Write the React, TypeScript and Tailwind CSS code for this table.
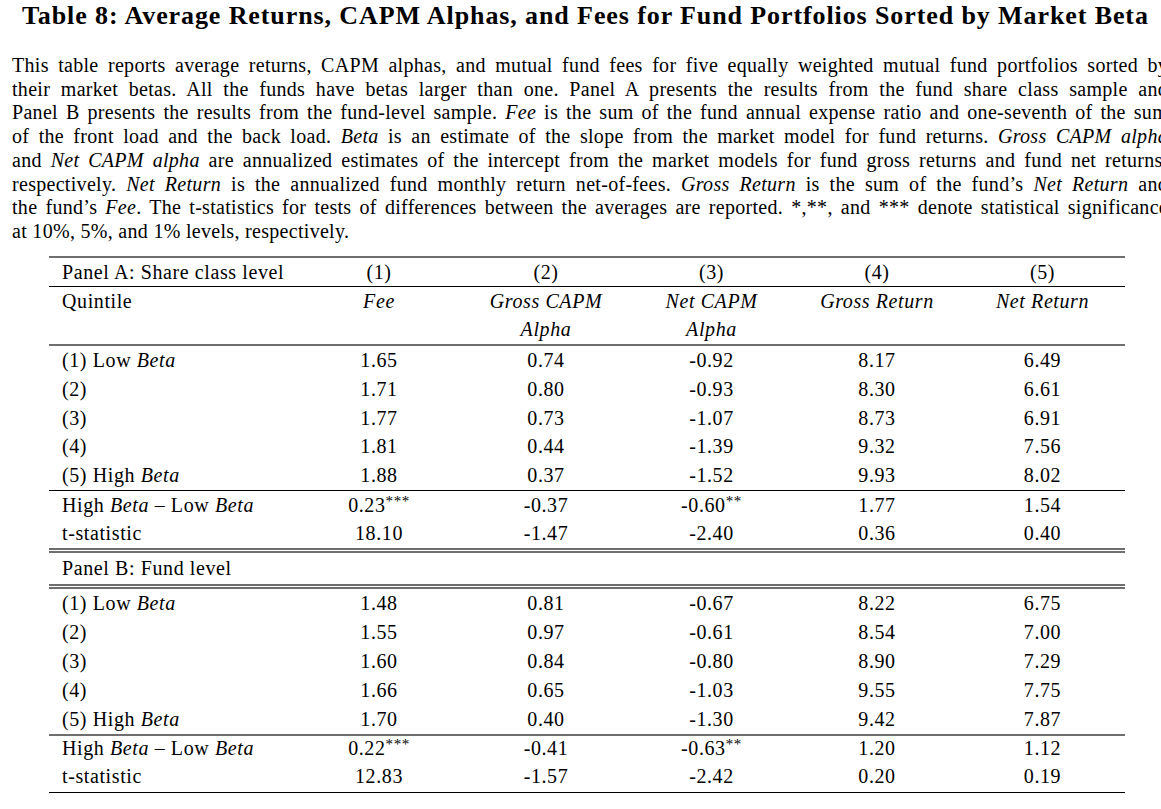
import React from "react";

const serif = { fontFamily: '"Liberation Serif", "Times New Roman", serif' };

type Cell = React.ReactNode;

const cols = "grid grid-cols-[246px_168px_166px_165px_166px_165px] items-center";

function Row({ cells, h }: { cells: Cell[]; h: string }) {
  return (
    <div className={`${cols} ${h}`}>
      {cells.map((c, i) => (
        <div key={i} className={i === 0 ? "pl-[13px] whitespace-nowrap" : "text-center whitespace-nowrap"}>
          {c}
        </div>
      ))}
    </div>
  );
}

const Stars = ({ n }: { n: string }) => <sup className="text-[15px] top-[-0.4em]">{n}</sup>;

const B = () => <i>Beta</i>;

const panelA: Cell[][] = [
  [<>(1) Low <B /></>, "1.65", "0.74", "-0.92", "8.17", "6.49"],
  ["(2)", "1.71", "0.80", "-0.93", "8.30", "6.61"],
  ["(3)", "1.77", "0.73", "-1.07", "8.73", "6.91"],
  ["(4)", "1.81", "0.44", "-1.39", "9.32", "7.56"],
  [<>(5) High <B /></>, "1.88", "0.37", "-1.52", "9.93", "8.02"],
];

const panelB: Cell[][] = [
  [<>(1) Low <B /></>, "1.48", "0.81", "-0.67", "8.22", "6.75"],
  ["(2)", "1.55", "0.97", "-0.61", "8.54", "7.00"],
  ["(3)", "1.60", "0.84", "-0.80", "8.90", "7.29"],
  ["(4)", "1.66", "0.65", "-1.03", "9.55", "7.75"],
  [<>(5) High <B /></>, "1.70", "0.40", "-1.30", "9.42", "7.87"],
];

const Gray = () => <div className="h-[2px] bg-[#6e6e6e]" />;
const Black = () => <div className="h-px bg-black" />;
const Double = () => (
  <div className="flex flex-col gap-[1px]">
    <Gray />
    <Gray />
  </div>
);

const lines: React.ReactNode[] = [
  <>This table reports average returns, CAPM alphas, and mutual fund fees for five equally weighted mutual fund portfolios sorted by</>,
  <>their market betas. All the funds have betas larger than one. Panel A presents the results from the fund share class sample and</>,
  <>Panel B presents the results from the fund-level sample. <i>Fee</i> is the sum of the fund annual expense ratio and one-seventh of the sum</>,
  <>of the front load and the back load. <i>Beta</i> is an estimate of the slope from the market model for fund returns. <i>Gross CAPM alpha</i></>,
  <>and <i>Net CAPM alpha</i> are annualized estimates of the intercept from the market models for fund gross returns and fund net returns,</>,
  <>respectively. <i>Net Return</i> is the annualized fund monthly return net-of-fees. <i>Gross Return</i> is the sum of the fund’s <i>Net Return</i> and</>,
  <>the fund’s <i>Fee</i>. The t-statistics for tests of differences between the averages are reported. *,**, and *** denote statistical significance</>,
];

export default function App() {
  return (
    <div className="w-[1161px] h-[809px] overflow-hidden bg-white text-black" style={serif}>
      {/* title */}
      <div className="h-[32px] leading-[32px] pl-[22px] text-[26px] font-bold whitespace-nowrap tracking-[0.9px]">
        Table 8: Average Returns, CAPM Alphas, and Fees for Fund Portfolios Sorted by Market Beta
      </div>

      {/* caption */}
      <div className="mt-[22px] ml-[12px] w-[1156px] text-[20px] leading-[23.7px] tracking-[0.3px]">
        {lines.map((l, i) => (
          <div key={i} className="text-justify [text-align-last:justify] whitespace-nowrap">
            {l}
          </div>
        ))}
        <div>at 10%, 5%, and 1% levels, respectively.</div>
      </div>

      {/* table */}
      <div className="mt-[12px] ml-[49px] w-[1076px] text-[20px] leading-[20px] tracking-[0.6px]">
        <Gray />
        <Row h="h-[28px]" cells={["Panel A: Share class level", "(1)", "(2)", "(3)", "(4)", "(5)"]} />
        <Black />
        <Row h="h-[28px]" cells={["Quintile", <i>Fee</i>, <i>Gross CAPM</i>, <i>Net CAPM</i>, <i>Gross Return</i>, <i>Net Return</i>]} />
        <Row h="h-[29px]" cells={["", "", <i>Alpha</i>, <i>Alpha</i>, "", ""]} />
        <Gray />
        {panelA.map((r, i) => (
          <Row key={i} h="h-[28.8px]" cells={r} />
        ))}
        <Black />
        <Row h="h-[28.5px]" cells={[<>High <B /> – Low <B /></>, <>0.23<Stars n="***" /></>, "-0.37", <>-0.60<Stars n="**" /></>, "1.77", "1.54"]} />
        <Row h="h-[28.5px]" cells={["t-statistic", "18.10", "-1.47", "-2.40", "0.36", "0.40"]} />
        <Double />
        <Row h="h-[31px]" cells={["Panel B: Fund level", "", "", "", "", ""]} />
        <Double />
        {panelB.map((r, i) => (
          <Row key={i} h="h-[29px]" cells={r} />
        ))}
        <Gray />
        <Row h="h-[28px] pb-[4px]" cells={[<>High <B /> – Low <B /></>, <>0.22<Stars n="***" /></>, "-0.41", <>-0.63<Stars n="**" /></>, "1.20", "1.12"]} />
        <Row h="h-[28px] pb-[4px]" cells={["t-statistic", "12.83", "-1.57", "-2.42", "0.20", "0.19"]} />
        <Black />
      </div>
    </div>
  );
}
